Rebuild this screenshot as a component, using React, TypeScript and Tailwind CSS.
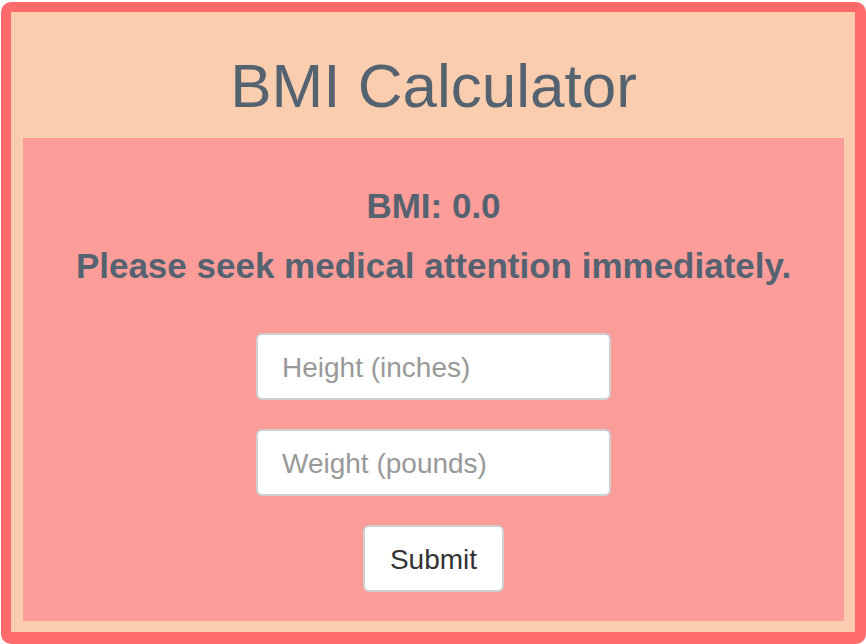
import React from "react";

export default function App() {
  return (
    <div
      className="w-[866px] h-[644px] overflow-hidden bg-white pt-[2px] pl-[1px]"
      style={{ fontFamily: '"Liberation Sans", Arial, Helvetica, sans-serif' }}
    >
      <div className="w-[865px] h-[642px] rounded-[10px] border-[10px] border-r-[11px] border-b-[12px] border-[#FF6B6B] bg-[#F9CDAD] pl-[12px] pr-[11px] flex flex-col">
        <h1 className="mt-[44px] mb-[22px] text-center text-[62px] leading-[60px] font-normal text-[#556270]">
          BMI Calculator
        </h1>
        <div className="h-[483px] bg-[#FC9D9A] flex flex-col items-center pt-[48px]">
          <div className="text-[35px] leading-[40px] font-bold text-[#556270]">BMI: 0.0</div>
          <div className="mt-[20px] text-[35px] leading-[40px] font-bold text-[#556270]">
            Please seek medical attention immediately.
          </div>
          <input
            type="text"
            placeholder="Height (inches)"
            className="mt-[47px] w-[355px] h-[67px] rounded-[6px] border-2 border-[#cfcfcf] bg-white pl-[24px] pt-[3px] text-[28px] text-[#333] placeholder:text-[#999] outline-none"
          />
          <input
            type="text"
            placeholder="Weight (pounds)"
            className="mt-[29px] w-[355px] h-[67px] rounded-[6px] border-2 border-[#cfcfcf] bg-white pl-[24px] pt-[3px] text-[28px] text-[#333] placeholder:text-[#999] outline-none"
          />
          <button
            type="button"
            className="mt-[29px] w-[141px] h-[67px] rounded-[6px] border-2 border-[#cfcfcf] bg-white pt-[3px] text-[28px] text-[#333]"
          >
            Submit
          </button>
        </div>
      </div>
    </div>
  );
}
